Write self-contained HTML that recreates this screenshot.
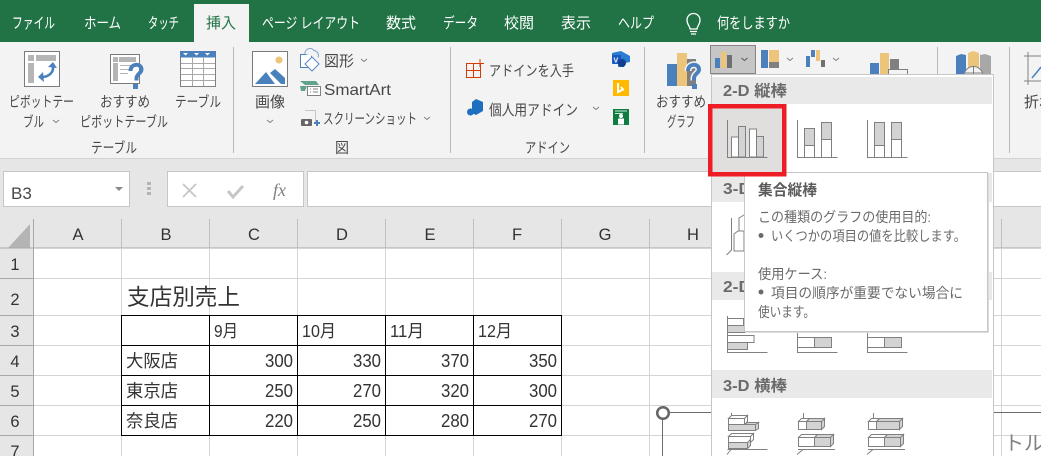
<!DOCTYPE html>
<html lang="ja"><head><meta charset="utf-8"><title>Excel</title>
<style>
html,body{margin:0;padding:0;background:#fff;width:1041px;height:456px;overflow:hidden}
svg{display:block;font-family:"Liberation Sans","Noto Sans CJK JP",sans-serif}
.t{fill:#fff;font-size:15px}
.r{fill:#484848;font-size:14.5px}
.c{fill:#333;font-size:17.5px}
.n{fill:#333;font-size:18px}
.h{fill:#333;font-size:16.5px;text-anchor:middle}
.g{fill:#6a6a6a;font-size:15.5px;font-weight:bold}
.tp{fill:#6a6a6a;font-size:14px}
.ic{fill:none;stroke:#808080;stroke-width:1}
</style></head><body>
<svg width="1041" height="456" viewBox="0 0 1041 456" xmlns="http://www.w3.org/2000/svg">
<!-- Base -->
<rect width="1041" height="456" fill="#fff"/>
<rect width="1041" height="42" fill="#217346"/>
<rect y="42" width="1041" height="116" fill="#f3f3f3"/>
<rect y="158" width="1041" height="61" fill="#e6e6e6"/>
<rect y="158" width="1041" height="1" fill="#d2d2d2"/>
<rect x="194" y="4" width="55" height="38" fill="#f3f3f3"/>

<!-- Tabs -->
<text class="t" x="12" y="28" textLength="43" lengthAdjust="spacingAndGlyphs">ファイル</text>
<text class="t" x="84" y="28" textLength="37" lengthAdjust="spacingAndGlyphs">ホーム</text>
<text class="t" x="148" y="28" textLength="31" lengthAdjust="spacingAndGlyphs">タッチ</text>
<text x="206" y="28" textLength="30" lengthAdjust="spacingAndGlyphs" style="fill:#217346;font-size:15px">挿入</text>
<text class="t" x="262" y="28" textLength="98" lengthAdjust="spacingAndGlyphs">ページ レイアウト</text>
<text class="t" x="386" y="28" textLength="30" lengthAdjust="spacingAndGlyphs">数式</text>
<text class="t" x="443" y="28" textLength="35" lengthAdjust="spacingAndGlyphs">データ</text>
<text class="t" x="504" y="28" textLength="30" lengthAdjust="spacingAndGlyphs">校閲</text>
<text class="t" x="561" y="28" textLength="30" lengthAdjust="spacingAndGlyphs">表示</text>
<text class="t" x="618" y="28" textLength="36" lengthAdjust="spacingAndGlyphs">ヘルプ</text>
<path d="M690 29c0-3-3-4-3-9a6.500 6.500 0 0 1 13 0c0 5-3 6-3 9zM690 31.500h7M691 34h5" fill="none" stroke="#fff" stroke-width="1.300"/>
<text class="t" x="717" y="28" textLength="73" lengthAdjust="spacingAndGlyphs">何をしますか</text>

<!-- Dividers -->
<g fill="#b8b8b8">
<rect x="233" y="47" width="1" height="106"/><rect x="450" y="47" width="1" height="106"/>
<rect x="644" y="47" width="1" height="106"/><rect x="937" y="47" width="1" height="106"/>
<rect x="1009" y="47" width="1" height="106"/>
</g>

<!-- Pivot icon -->
<rect x="24.500" y="51.500" width="35" height="35" fill="#fff" stroke="#7b7b7b"/>
<g fill="#b5b5b5"><rect x="28" y="55" width="6" height="6"/><rect x="36" y="55" width="20" height="6"/><rect x="28" y="63" width="6" height="20"/></g>
<path d="M53 66c1 6-4 11-11 11" fill="none" stroke="#4a81bd" stroke-width="2.600"/>
<path d="M48 67l5-5 4 6zM43 72l-5 5 6 5z" fill="#4a81bd"/>

<!-- Recommended pivot -->
<rect x="110.500" y="54.500" width="29" height="29" fill="#fff" stroke="#7b7b7b"/>
<g fill="#b5b5b5"><rect x="113" y="57" width="5" height="5"/><rect x="119" y="57" width="17" height="5"/><rect x="113" y="63" width="5" height="18"/><rect x="120" y="65" width="12" height="1"/><rect x="120" y="69" width="12" height="1"/><rect x="120" y="73" width="8" height="1"/></g>
<path d="M130.500 71c0-8 11-8 11-1.500 0 4-5 4-5 9v2" fill="none" stroke="#4a81bd" stroke-width="4"/>
<rect x="133" y="84" width="5" height="5" fill="#4a81bd"/>

<!-- Table -->
<rect x="180.500" y="51.500" width="35" height="35" fill="#fff" stroke="#808080"/>
<rect x="180" y="51" width="36" height="6.500" fill="#4a81bd"/>
<path d="M183 53h5l-2.500 2.500zM194 53h5l-2.500 2.500zM205 53h5l-2.500 2.500z" fill="#fff"/>
<path d="M192.500 57v29M203.500 57v29M181 63.500h34M181 68.500h34M181 74.500h34M181 80.500h34" stroke="#a8a8a8" fill="none"/>

<text class="r" x="9" y="107" textLength="65" lengthAdjust="spacingAndGlyphs">ピボットテー</text>
<text class="r" x="23" y="127" textLength="21" lengthAdjust="spacingAndGlyphs">ブル</text>
<path d="M53 120l3 2.500 3-2.500" class="ic"/>
<text class="r" x="100" y="107" textLength="50" lengthAdjust="spacingAndGlyphs">おすすめ</text>
<text class="r" x="80" y="127" textLength="88" lengthAdjust="spacingAndGlyphs">ピボットテーブル</text>
<text class="r" x="175" y="107" textLength="46" lengthAdjust="spacingAndGlyphs">テーブル</text>
<text class="r" x="91" y="153" textLength="46" lengthAdjust="spacingAndGlyphs">テーブル</text>

<!-- Picture -->
<rect x="252.500" y="51.500" width="35" height="35" fill="#fff" stroke="#7b7b7b"/>
<circle cx="279" cy="60" r="3.500" fill="#ecc57b"/>
<path d="M255 84l11-12 9 12zM270 73l5-4 10 9v6h-4z" fill="#4a81bd"/>
<text x="255" y="107" textLength="30" lengthAdjust="spacingAndGlyphs" style="fill:#484848;font-size:15px">画像</text>
<path d="M267 120l3 2.500 3-2.500" class="ic"/>

<!-- Shapes -->
<path d="M300.500 54.500h11v13h-11z" fill="#fff" stroke="#4a81bd"/>
<path d="M305 54a5 5 0 0 1 9-3.500 5 5 0 0 1 4 7" fill="#f3f3f3" stroke="#7aa0cc"/>
<path d="M312 57l7 7-7 7-7-7z" fill="#fff" stroke="#5a8ac0"/>
<text class="r" x="324" y="66" textLength="30" lengthAdjust="spacingAndGlyphs" style="font-size:15px">図形</text>
<path d="M361 59l3 2.500 3-2.500" class="ic"/>
<path d="M300 81h16l3 4h-14zM300 86h7l-2 5h-4z" fill="#5fa38b"/>
<rect x="307.500" y="86.500" width="13" height="9" fill="#fff" stroke="#808080"/>
<path d="M310 89h1M313 89h5M310 92h1M313 92h5" stroke="#808080"/>
<text x="324" y="95" textLength="67" lengthAdjust="spacingAndGlyphs" style="fill:#484848;font-size:16px">SmartArt</text>
<path d="M305.500 110.500h10v11" fill="none" stroke="#999" stroke-dasharray="1 1"/>
<rect x="301" y="119" width="11" height="7" rx="1" fill="#666"/><circle cx="306.500" cy="122.500" r="1.800" fill="#fff"/>
<path d="M314 123h6M317 120v6" stroke="#4a81bd" stroke-width="2"/>
<text class="r" x="323" y="124" textLength="94" lengthAdjust="spacingAndGlyphs">スクリーンショット</text>
<path d="M424 117l3 2.500 3-2.500" class="ic"/>
<text class="r" x="335" y="153" textLength="14" lengthAdjust="spacingAndGlyphs">図</text>

<!-- Add-ins -->
<path d="M466.500 63.500h14v14h-14zM466.500 70.500h14M473.500 63.500v14" fill="none" stroke="#d83b01"/>
<path d="M476 63.500h8M480 59v8" fill="none" stroke="#d83b01"/>
<text class="r" x="489" y="76" textLength="85" lengthAdjust="spacingAndGlyphs">アドインを入手</text>
<path d="M476 99l7 3v9l-7 4-4-2v-11z" fill="#1f6fc0"/><circle cx="470.500" cy="112" r="3.500" fill="#1f6fc0"/>
<text class="r" x="489" y="115" textLength="89" lengthAdjust="spacingAndGlyphs" style="font-size:15px">個人用アドイン</text>
<path d="M593 107l3 2.500 3-2.500" class="ic"/>
<text class="r" x="525" y="153" textLength="45" lengthAdjust="spacingAndGlyphs">アドイン</text>
<path d="M621 51l9 5v6l-5 1-1 4h-6v-5h-6v-9z" fill="#2b7cd3"/><rect x="612" y="55" width="9" height="9" rx="1" fill="#185abd"/><circle cx="622" cy="63" r="4" fill="#103f91"/>
<text x="613.500" y="62.500" style="fill:#fff;font-size:7px;font-weight:bold">V</text>
<rect x="613" y="80" width="16" height="16" fill="#ffb900"/>
<path d="M618 83v9l5-2.500-2-2.500" fill="none" stroke="#fff" stroke-width="2"/>
<rect x="613" y="109" width="16" height="16" fill="#107c41"/>
<path d="M615 111h12M615 113.500h8" stroke="#cde6d8"/><circle cx="621" cy="116" r="2" fill="#fff"/><rect x="618" y="118.500" width="6" height="6" fill="#fff"/>

<!-- Recommended chart -->
<rect x="667" y="64" width="10" height="22" fill="#4a81bd"/>
<rect x="677" y="53" width="10" height="33" fill="#ecc57b"/>
<rect x="687" y="59" width="9" height="27" fill="#808080"/>
<path d="M688 71c0-8 11-8 11-1.500 0 4-5 4-5 9v2" fill="none" stroke="#f3f3f3" stroke-width="7"/>
<path d="M688 71c0-8 11-8 11-1.500 0 4-5 4-5 9v2" fill="none" stroke="#4a81bd" stroke-width="4"/>
<rect x="692" y="84" width="5" height="5" fill="#4a81bd"/>
<text class="r" x="656" y="107" textLength="50" lengthAdjust="spacingAndGlyphs">おすすめ</text>
<text class="r" x="667" y="127" textLength="28" lengthAdjust="spacingAndGlyphs">グラフ</text>

<!-- Chart buttons -->
<rect x="710.500" y="45.500" width="45" height="28" fill="#c6c6c6" stroke="#858585"/>
<rect x="715" y="58" width="5" height="10" fill="#4a81bd"/><rect x="721" y="51.500" width="5" height="16.500" fill="#ecc57b"/><rect x="727" y="55" width="5" height="13" fill="#707070"/>
<path d="M741.500 58l3 2.500 3-2.500" fill="none" stroke="#555"/>
<rect x="761" y="50" width="7" height="18" fill="#4a81bd"/><rect x="769" y="50" width="10" height="12" fill="#ecc57b"/><rect x="769" y="62" width="10" height="6" fill="#808080"/>
<path d="M787 58l3 2.500 3-2.500" class="ic"/>
<rect x="806" y="56" width="4" height="11" fill="#4a81bd"/><rect x="811" y="50" width="4" height="7" fill="#4a81bd"/><rect x="816" y="50" width="4" height="11" fill="#ecc57b"/><rect x="821" y="60" width="4" height="7" fill="#707070"/>
<path d="M833 58l3 2.500 3-2.500" class="ic"/>
<rect x="870" y="63" width="9" height="12" fill="#4a81bd"/><rect x="880" y="53" width="9" height="22" fill="#ecc57b"/><rect x="890" y="59" width="9" height="16" fill="#808080"/>
<rect x="888.500" y="69.500" width="19" height="8" fill="#f3f3f3" stroke="#808080"/>
<path d="M956 56l5-2 5 1v20h-10z" fill="#4a81bd"/><path d="M968 53l5-2 6 2v22h-11z" fill="#ecc57b"/><path d="M980 55l5-1 6 2v19h-11z" fill="#a8a8a8"/>
<circle cx="973.500" cy="76" r="9.500" fill="#f3f3f3" stroke="#808080"/>
<path d="M964 73h19M973.500 67v9" stroke="#808080" fill="none"/>
<path d="M1028 52v33M1024 56h17M1024 81h17" stroke="#808080" fill="none"/>
<path d="M1032 78l5-6 4-5" stroke="#4a81bd" stroke-width="1.500" fill="none"/>
<text class="r" x="1024" y="107" style="font-size:15px">折れ</text>

<!-- Formula bar -->
<rect x="3.500" y="171.500" width="126" height="35" fill="#fff" stroke="#c6c6c6"/>
<text x="11" y="199" style="fill:#484848;font-size:17px">B3</text>
<path d="M115 187h8l-4 4z" fill="#888"/>
<path d="M147 182h4v3h-4zM147 187h4v3h-4zM147 192h4v3h-4z" fill="#b4b4b4"/>
<rect x="167.500" y="171.500" width="136" height="35" fill="#fff" stroke="#c6c6c6"/>
<path d="M183 184l13 13M196 184l-13 13" stroke="#c6c6c6" stroke-width="1.800"/>
<path d="M228 191l5 6 10-11" stroke="#c6c6c6" stroke-width="3" fill="none"/>
<text x="273" y="196" style="fill:#808080;font-family:'Liberation Serif',serif;font-size:18px;font-style:italic">fx</text>
<rect x="307.500" y="171.500" width="740" height="35" fill="#fff" stroke="#c6c6c6"/>

<!-- Column/row headers -->
<rect y="219" width="1041" height="29" fill="#e6e6e6"/>
<rect y="219" width="33" height="237" fill="#e6e6e6"/>
<path d="M30 224v24H8z" fill="#b4b4b4"/>
<g fill="#c0c0c0">
<rect x="121" y="219" width="1" height="29"/><rect x="209" y="219" width="1" height="29"/><rect x="297" y="219" width="1" height="29"/><rect x="385" y="219" width="1" height="29"/><rect x="473" y="219" width="1" height="29"/><rect x="561" y="219" width="1" height="29"/><rect x="649" y="219" width="1" height="29"/><rect x="737" y="219" width="1" height="29"/><rect x="825" y="219" width="1" height="29"/><rect x="1001" y="219" width="1" height="29"/>
</g>
<rect x="33" y="219" width="1" height="237" fill="#a8a8a8"/>
<rect y="247.500" width="1041" height="1" fill="#a8a8a8"/>
<g fill="#a8a8a8"><rect y="278" width="33" height="1"/><rect y="315" width="33" height="1"/><rect y="345" width="33" height="1"/><rect y="375" width="33" height="1"/><rect y="405" width="33" height="1"/><rect y="435" width="33" height="1"/></g>
<g>
<text class="h" x="78" y="240">A</text><text class="h" x="166" y="240">B</text><text class="h" x="254" y="240">C</text><text class="h" x="342" y="240">D</text><text class="h" x="430" y="240">E</text><text class="h" x="517" y="240">F</text><text class="h" x="605" y="240">G</text><text class="h" x="693" y="240">H</text>
<text class="h" x="15" y="270">1</text><text class="h" x="15" y="305">2</text><text class="h" x="15" y="337">3</text><text class="h" x="15" y="367">4</text><text class="h" x="15" y="397">5</text><text class="h" x="15" y="427">6</text><text class="h" x="15" y="457">7</text>
</g>

<!-- Gridlines -->
<g fill="#d4d4d4">
<rect x="121" y="248" width="1" height="208"/><rect x="209" y="248" width="1" height="208"/><rect x="297" y="248" width="1" height="208"/><rect x="385" y="248" width="1" height="208"/><rect x="473" y="248" width="1" height="208"/><rect x="561" y="248" width="1" height="208"/><rect x="649" y="248" width="1" height="208"/><rect x="737" y="248" width="1" height="208"/><rect x="825" y="248" width="1" height="208"/><rect x="1001" y="248" width="1" height="208"/>
<rect x="34" y="278" width="1007" height="1"/><rect x="34" y="315" width="1007" height="1"/><rect x="34" y="345" width="1007" height="1"/><rect x="34" y="375" width="1007" height="1"/><rect x="34" y="405" width="1007" height="1"/><rect x="34" y="435" width="1007" height="1"/>
</g>

<!-- Table -->
<path d="M121.500 315.500h440v120h-440zM121.500 345.500h440M121.500 375.500h440M121.500 405.500h440M209.500 315.500v120M297.500 315.500v120M385.500 315.500v120M473.500 315.500v120" fill="none" stroke="#000"/>
<text x="127" y="305" textLength="113" lengthAdjust="spacingAndGlyphs" style="fill:#333;font-size:22.500px">支店別売上</text>
<text class="c" x="214" y="337" textLength="24" lengthAdjust="spacingAndGlyphs">9月</text><text class="c" x="302" y="337" textLength="34" lengthAdjust="spacingAndGlyphs">10月</text><text class="c" x="390" y="337" textLength="34" lengthAdjust="spacingAndGlyphs">11月</text><text class="c" x="478" y="337" textLength="34" lengthAdjust="spacingAndGlyphs">12月</text>
<text class="c" x="126" y="367" textLength="52" lengthAdjust="spacingAndGlyphs">大阪店</text><text class="c" x="126" y="397" textLength="52" lengthAdjust="spacingAndGlyphs">東京店</text><text class="c" x="126" y="427" textLength="52" lengthAdjust="spacingAndGlyphs">奈良店</text>
<text class="n" x="265" y="367" textLength="28" lengthAdjust="spacingAndGlyphs">300</text><text class="n" x="353" y="367" textLength="28" lengthAdjust="spacingAndGlyphs">330</text><text class="n" x="441" y="367" textLength="28" lengthAdjust="spacingAndGlyphs">370</text><text class="n" x="529" y="367" textLength="28" lengthAdjust="spacingAndGlyphs">350</text>
<text class="n" x="265" y="397" textLength="28" lengthAdjust="spacingAndGlyphs">250</text><text class="n" x="353" y="397" textLength="28" lengthAdjust="spacingAndGlyphs">270</text><text class="n" x="441" y="397" textLength="28" lengthAdjust="spacingAndGlyphs">320</text><text class="n" x="529" y="397" textLength="28" lengthAdjust="spacingAndGlyphs">300</text>
<text class="n" x="265" y="427" textLength="28" lengthAdjust="spacingAndGlyphs">220</text><text class="n" x="353" y="427" textLength="28" lengthAdjust="spacingAndGlyphs">250</text><text class="n" x="441" y="427" textLength="28" lengthAdjust="spacingAndGlyphs">280</text><text class="n" x="529" y="427" textLength="28" lengthAdjust="spacingAndGlyphs">270</text>

<!-- Chart object -->
<path d="M663 412.500h378M662.500 418v38" stroke="#6b6b6b" fill="none"/>
<circle cx="663" cy="413" r="5.800" fill="#fff" stroke="#666" stroke-width="2.500"/>
<text x="1004" y="450" style="fill:#808080;font-size:20px" textLength="40" lengthAdjust="spacingAndGlyphs">トル</text>

<!-- Dropdown gallery -->
<rect x="711" y="74" width="283" height="382" fill="#c6c6c6"/>
<rect x="712" y="75" width="281" height="381" fill="#fff"/>
<rect x="712" y="77" width="280" height="27" fill="#e9e9e9"/>
<rect x="712" y="173" width="280" height="29" fill="#e9e9e9"/>
<rect x="712" y="272" width="280" height="28" fill="#e9e9e9"/>
<rect x="712" y="370" width="280" height="28" fill="#e9e9e9"/>
<text class="g" x="723" y="96" textLength="64" lengthAdjust="spacingAndGlyphs">2-D 縦棒</text>
<text class="g" x="723" y="194" textLength="28" lengthAdjust="spacingAndGlyphs">3-D</text>
<text class="g" x="723" y="292" textLength="28" lengthAdjust="spacingAndGlyphs">2-D</text>
<text class="g" x="723" y="391" textLength="64" lengthAdjust="spacingAndGlyphs">3-D 横棒</text>

<!-- selected cell background -->
<rect x="710" y="106" width="74" height="68" fill="#e0dfdd"/>

<!-- 2D column icons -->
<g stroke="#808080" stroke-width="1">
<path d="M727.500 120v37.500h40" fill="none"/>
<rect x="731.500" y="137" width="7" height="20" fill="#fff"/><rect x="738.500" y="126.500" width="7" height="30.500" fill="#d3d3d3"/>
<rect x="749.500" y="129" width="7" height="28" fill="#fff"/><rect x="756.500" y="136.500" width="7" height="20.500" fill="#d3d3d3"/>
<path d="M797.500 120v37.500h40" fill="none"/>
<rect x="804.500" y="128.500" width="10" height="17" fill="#d3d3d3"/><rect x="804.500" y="145.500" width="10" height="12" fill="#fff"/>
<rect x="821.500" y="122.500" width="10" height="17" fill="#d3d3d3"/><rect x="821.500" y="139.500" width="10" height="18" fill="#fff"/>
<path d="M867.500 120v37.500h40" fill="none"/>
<rect x="874.500" y="122.500" width="10" height="23" fill="#d3d3d3"/><rect x="874.500" y="145.500" width="10" height="12" fill="#fff"/>
<rect x="891.500" y="122.500" width="10" height="17" fill="#d3d3d3"/><rect x="891.500" y="139.500" width="10" height="18" fill="#fff"/>

<!-- 3D column partial -->
<path d="M731.500 218v32l-5 5" fill="none"/><path d="M734 251v-17l4-3h6v20z" fill="#fff"/><path d="M739 231v-13l5-3" fill="none"/>

<!-- 2D bar icons -->
<path d="M727.500 316v36.500h40" fill="none"/>
<rect x="727.500" y="318.500" width="16" height="7" fill="#fff"/><rect x="727.500" y="325.500" width="20" height="7" fill="#d3d3d3"/>
<rect x="727.500" y="335.500" width="26.500" height="7" fill="#fff"/><rect x="727.500" y="342.500" width="20" height="7" fill="#d3d3d3"/>
<path d="M797.500 316v36.500h40" fill="none"/>
<rect x="797.500" y="337.500" width="17" height="10" fill="#fff"/><rect x="814.500" y="337.500" width="17" height="10" fill="#d3d3d3"/>
<path d="M867.500 316v36.500h40" fill="none"/>
<rect x="867.500" y="337.500" width="17" height="10" fill="#fff"/><rect x="884.500" y="337.500" width="17" height="10" fill="#d3d3d3"/>

<!-- 3D clustered bar -->
<path d="M731.500 413v4M727.500 449.500h40M731 449.500l-4 5" fill="none"/>
<path d="M728.500 418.500l3-3h16l-3 3zM744.500 418.500l3-3v6l-3 3z" fill="#fff"/><rect x="728.500" y="418.500" width="16" height="6" fill="#fff"/>
<path d="M755.500 424.500l3-2v6l-3 2zM744.500 424.500l3-2h11l-3 2z" fill="#d3d3d3"/><rect x="728.500" y="424.500" width="27" height="6" fill="#d3d3d3"/>
<path d="M728.500 436.500l3-3h22l-3 3zM750.500 436.500l3-3v6l-3 3z" fill="#fff"/><rect x="728.500" y="436.500" width="22" height="6" fill="#fff"/>
<path d="M747.500 442.500l3-3v6l-3 3z" fill="#d3d3d3"/><rect x="728.500" y="442.500" width="19" height="6" fill="#d3d3d3"/>

<!-- 3D stacked bar -->
<path d="M803.500 413v5M798 449.500h37M803 449.500l-6 5" fill="none"/>
<path d="M798.500 421.500l3-3h8l-3 3z" fill="#fff"/><rect x="798.500" y="421.500" width="8" height="8" fill="#fff"/>
<path d="M806.500 421.500l3-3h15l-3 3zM821.500 421.500l3-3v8l-3 3z" fill="#d3d3d3"/><rect x="806.500" y="421.500" width="15" height="8" fill="#d3d3d3"/>
<path d="M798.500 437.500l3-3h16l-3 3z" fill="#fff"/><rect x="798.500" y="437.500" width="16" height="9" fill="#fff"/>
<path d="M814.500 437.500l3-3h16l-3 3zM830.500 437.500l3-3v9l-3 3z" fill="#d3d3d3"/><rect x="814.500" y="437.500" width="16" height="9" fill="#d3d3d3"/>

<!-- 3D 100% bar -->
<path d="M873.500 413v5M868 449.500h37M873 449.500l-6 5" fill="none"/>
<path d="M868.500 421.500l3-3h8l-3 3z" fill="#fff"/><rect x="868.500" y="421.500" width="8" height="8" fill="#fff"/>
<path d="M876.500 421.500l3-3h23l-3 3zM899.500 421.500l3-3v8l-3 3z" fill="#d3d3d3"/><rect x="876.500" y="421.500" width="23" height="8" fill="#d3d3d3"/>
<path d="M868.500 437.500l3-3h16l-3 3z" fill="#fff"/><rect x="868.500" y="437.500" width="16" height="9" fill="#fff"/>
<path d="M884.500 437.500l3-3h16l-3 3zM900.500 437.500l3-3v9l-3 3z" fill="#d3d3d3"/><rect x="884.500" y="437.500" width="16" height="9" fill="#d3d3d3"/>
</g>

<!-- Tooltip -->
<rect x="745" y="173" width="244" height="160" fill="#dcdcdc"/>
<rect x="744.500" y="172.500" width="243" height="159" fill="#fff" stroke="#c6c6c6"/>
<text x="758" y="195" textLength="59" lengthAdjust="spacingAndGlyphs" style="fill:#5a5a5a;font-size:15px;font-weight:bold">集合縦棒</text>
<text class="tp" x="758" y="222" textLength="173" lengthAdjust="spacingAndGlyphs">この種類のグラフの使用目的:</text>
<circle cx="761" cy="235.500" r="2.500" fill="#6a6a6a"/>
<text class="tp" x="771" y="241" textLength="195" lengthAdjust="spacingAndGlyphs">いくつかの項目の値を比較します。</text>
<text class="tp" x="758" y="279" textLength="69" lengthAdjust="spacingAndGlyphs">使用ケース:</text>
<circle cx="761" cy="292" r="2.500" fill="#6a6a6a"/>
<text class="tp" x="771" y="298" textLength="192" lengthAdjust="spacingAndGlyphs">項目の順序が重要でない場合に</text>
<text class="tp" x="758" y="317" textLength="57" lengthAdjust="spacingAndGlyphs">使います。</text>

<!-- Red highlight, drawn over the tooltip -->
<rect x="710.250" y="106.250" width="74" height="68" fill="none" stroke="#ee1c25" stroke-width="4.500"/>
</svg>
</body></html>
